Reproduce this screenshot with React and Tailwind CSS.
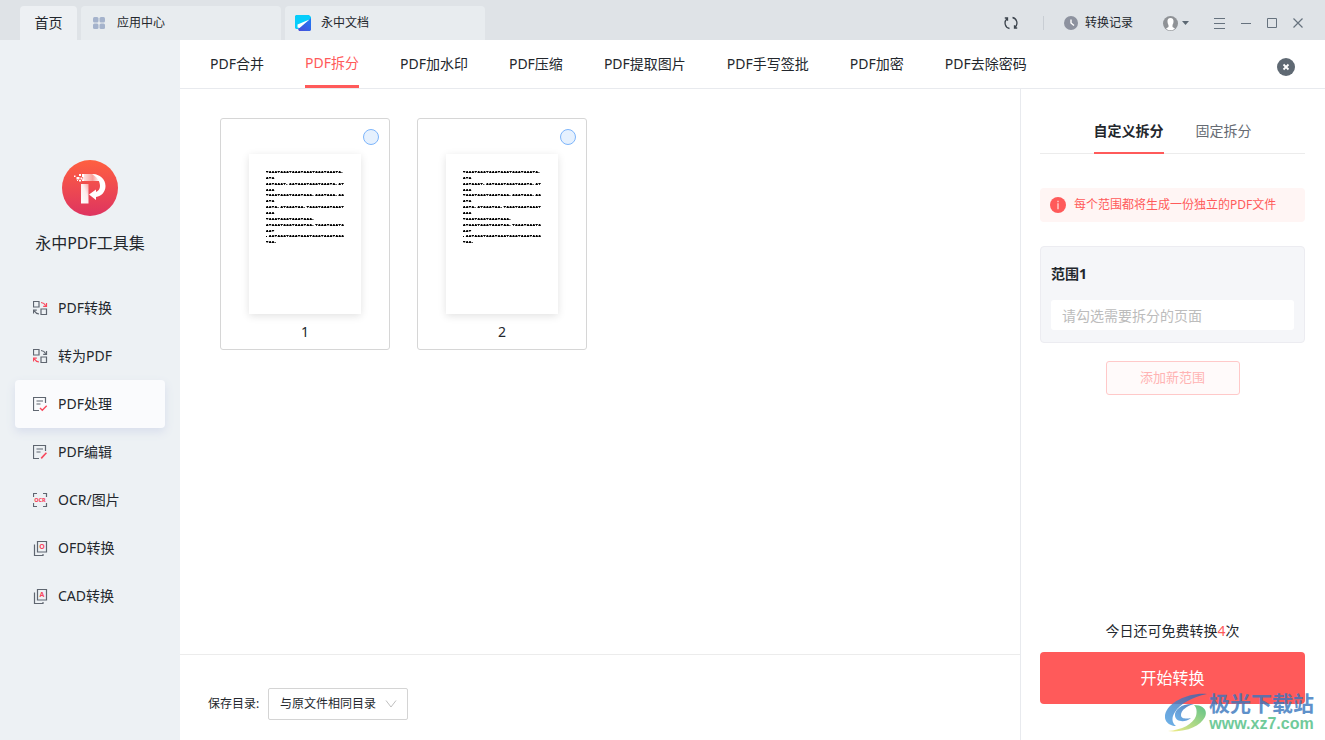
import React, { useState } from "react";

const fontStack = "font-['Noto_Sans','Noto_Sans_CJK_SC',sans-serif]";

const toolTabs = [
  "PDF合并",
  "PDF拆分",
  "PDF加水印",
  "PDF压缩",
  "PDF提取图片",
  "PDF手写签批",
  "PDF加密",
  "PDF去除密码"
];

const menuItems = [
  { label: "PDF转换", icon: "convertFrom" },
  { label: "转为PDF", icon: "convertTo" },
  { label: "PDF处理", icon: "process" },
  { label: "PDF编辑", icon: "edit" },
  { label: "OCR/图片", icon: "ocr" },
  { label: "OFD转换", icon: "ofd" },
  { label: "CAD转换", icon: "cad" }
];

// Rows of the page preview: c = character, . = punctuation
const previewRows = [
  "cccccccccccccccccccccccccc.",
  "ccc",
  "ccccccc.cccccccccccccccc.cc",
  "ccc",
  "cccccccccccccccc.ccccccc.cc",
  "ccc",
  "cccc.cccccccc.ccccccccccccc",
  "ccc",
  "cccccccccccccccc.",
  "cccccccccccccccc.cccccccccc",
  "ccc",
  ".cccccccccccccccccccccccccc",
  "ccc."
];

const MenuIcon = ({ name }) => {
  const dark = "#5f6670";
  const red = "#f9485c";
  const paper = (
    <path d="M12.5 6V.5H.5v13H6M3.500 4h6.500M3.500 7h4" stroke={dark} />
  );
  const pages = (
    <path d="M4.500.5h9v10.500h-9zM1.500 3.500v11h8.500V13" stroke={dark} />
  );

  return (
    <svg width="16" height="16" viewBox="0 -1 16 16" fill="none" strokeWidth="1.2" aria-hidden="true">
      {(name === "convertFrom" || name === "convertTo") && (
        <>
          <path d="M.5.5h5.500v5.500H.5zM8 8h5.500v5.500H8z" stroke={dark} />
          <path
            d="M8 1.500c2 .2 3.600 1.100 4.600 3M13.500 2v3.300h-3.300"
            stroke={name === "convertFrom" ? red : dark}
          />
          <path
            d="M6 13c-2-.2-3.600-1.100-4.600-3M.5 12.500V9.200h3.300"
            stroke={name === "convertFrom" ? dark : red}
          />
        </>
      )}
      {name === "process" && (
        <>
          {paper}
          <path d="M7 11l2.300 2.300 4.400-4.500" stroke={red} strokeWidth="1.4" />
        </>
      )}
      {name === "edit" && (
        <>
          {paper}
          <path d="M8.200 13.400l5.200-5.600" stroke={red} strokeWidth="1.6" />
        </>
      )}
      {name === "ocr" && (
        <>
          <path d="M.5 4V.5H4M10 .5h3.500V4M13.500 10v3.500H10M4 13.500H.5V10" stroke={dark} />
          <text x="7" y="9" textAnchor="middle" fontSize="5.5" fontWeight="800" fill={red}>OCR</text>
        </>
      )}
      {name === "ofd" && (
        <>
          {pages}
          <text x="9" y="8.3" textAnchor="middle" fontSize="7" fontWeight="700" fill={red}>O</text>
        </>
      )}
      {name === "cad" && (
        <>
          {pages}
          <text x="9" y="8.3" textAnchor="middle" fontSize="7" fontWeight="700" fill={red}>A</text>
        </>
      )}
    </svg>
  );
};

const AppLogo = () => (
  <svg width="56" height="56" viewBox="0 0 56 56" aria-hidden="true">
    <defs>
      <linearGradient id="logoBg" x1="0" y1="0" x2="0" y2="1">
        <stop offset="0" stopColor="#ff6040" />
        <stop offset="1" stopColor="#de3460" />
      </linearGradient>
      <linearGradient id="logoBar" x1="0" y1="0" x2="1" y2="0">
        <stop offset="0" stopColor="#fff" stopOpacity="0.85" />
        <stop offset="0.6" stopColor="#fff" stopOpacity="0.45" />
        <stop offset="1" stopColor="#fff" />
      </linearGradient>
      <linearGradient id="logoStem" x1="0" y1="1" x2="1" y2="0">
        <stop offset="0" stopColor="#fff" />
        <stop offset="0.6" stopColor="#fff" stopOpacity="0.9" />
        <stop offset="1" stopColor="#fff" stopOpacity="0.5" />
      </linearGradient>
    </defs>
    <circle cx="28" cy="28" r="28" fill="url(#logoBg)" />
    <path d="M19 24h7.500v19.500H19z" fill="url(#logoStem)" />
    <path d="M21 14h10c5 0 7 3 6 7H21z" fill="url(#logoBar)" />
    <path d="M30 14c8 0 13.500 5 13.500 12 0 6-4 10-9.500 11v3l-7-5.500 7-5v2.500c2.500-1 4-3 4-6 0-5-3-9-8-12z" fill="#fff" />
    <path d="M17 14h2v2h-2zM20 14h2v3h-2zM14.500 17h3v2.500h-3zM18.500 17.500h2v2h-2zM12 15.500h1.500V17H12zM17 20h2v1.500h-2zM15 20h1v1h-1zM20 19.500h2V21h-2z" fill="#fff" />
  </svg>
);

const TitleBar = () => (
  <header className="flex h-10 items-end bg-[#dfe3e7] pl-5 pr-[22px] text-xs">
    <nav className="flex items-end gap-1">
      <button className="h-[34px] w-[57px] rounded-t bg-[#edf0f3] text-sm">首页</button>
      <button className="flex h-[34px] w-[200px] items-center gap-3 rounded-t bg-[#e8ecef] px-3">
        <svg width="12" height="12" viewBox="0 0 12 12" fill="#a5b3cc" aria-hidden="true">
          <rect width="5.5" height="5.5" rx="1.5" />
          <rect x="6.5" width="5.5" height="5.5" rx="1.5" />
          <rect y="6.5" width="5.5" height="5.5" rx="1.5" />
          <rect x="6.5" y="6.5" width="5.5" height="5.5" rx="1.5" />
        </svg>
        应用中心
      </button>
      <button className="flex h-[34px] w-[200px] items-center gap-[10px] rounded-t bg-[#e8ecef] px-[10px]">
        <svg width="16" height="16" viewBox="0 0 16 16" aria-hidden="true">
          <defs>
            <linearGradient id="docBlue" x1="1" y1="0" x2="0" y2="1">
              <stop offset="0" stopColor="#1e7df5" />
              <stop offset="1" stopColor="#4a4bd8" />
            </linearGradient>
          </defs>
          <path d="M1 0h13l2 2v5l-13 7H1l-1-1V1z" fill="#06cdfb" />
          <path d="M16 3v12l-1 1H4l-1-2z" fill="url(#docBlue)" />
          <path d="M14.500 4.500L2.500 9.500v3l2 .5z" fill="#fff" />
        </svg>
        永中文档
      </button>
    </nav>
    <div className="ml-auto flex h-[34px] items-center">
      <button aria-label="刷新">
        <svg width="14" height="14" viewBox="0 0 14 14" fill="none" stroke="#3c444d" strokeWidth="1.3" aria-hidden="true">
          <path d="M5.500 12.500A5.600 5.600 0 0 1 2.800 3M.8 2h2.700v2.700M8.500 1.500A5.600 5.600 0 0 1 11.200 11M13.200 12h-2.700V9.300" />
        </svg>
      </button>
      <span className="ml-[25px] h-[14px] w-px bg-[#c9ced4]" />
      <button className="ml-5 flex items-center gap-[7px]">
        <svg width="14" height="14" viewBox="0 0 14 14" fill="none" aria-hidden="true">
          <circle cx="7" cy="7" r="7" fill="#8d929f" />
          <path d="M7 3.500V7l3 2.500" stroke="#fff" strokeWidth="1.4" />
        </svg>
        转换记录
      </button>
      <button className="ml-[30px] flex items-center gap-1" aria-label="账户">
        <svg width="15" height="15" viewBox="0 0 15 15" aria-hidden="true">
          <circle cx="7.5" cy="7.5" r="7.5" fill="#8f9296" />
          <path d="M7.500 2c2.200 0 3.200 1.600 3 3.700-.1 1.500-.6 2.500-1 3.200v2l2.500 1.500c-2.500 2.600-6.500 2.600-9 0L5.500 11V9c-.4-.8-.9-1.800-1-3.300C4.300 3.600 5.300 2 7.500 2z" fill="#fff" />
        </svg>
        <svg width="7" height="4" viewBox="0 0 7 4" fill="#5c6873" aria-hidden="true">
          <path d="M0 0h7L3.500 4z" />
        </svg>
      </button>
      <div className="ml-[25px] flex items-center gap-4">
        <button aria-label="菜单">
          <svg width="11" height="12" viewBox="0 0 11 12" stroke="#66727e" aria-hidden="true">
            <path d="M0 1.500h11M0 6.500h11M0 11.500h11" />
          </svg>
        </button>
        <button aria-label="最小化">
          <svg width="10" height="12" viewBox="0 0 10 12" stroke="#66727e" aria-hidden="true">
            <path d="M0 6.500h10" />
          </svg>
        </button>
        <button aria-label="最大化">
          <svg width="10" height="10" viewBox="0 0 10 10" fill="none" stroke="#66727e" aria-hidden="true">
            <path d="M.5.5h9v9h-9z" />
          </svg>
        </button>
        <button aria-label="关闭">
          <svg width="10" height="10" viewBox="0 0 10 10" stroke="#66727e" strokeWidth="1.2" aria-hidden="true">
            <path d="M.5.5l9 9M9.500.5l-9 9" />
          </svg>
        </button>
      </div>
    </div>
  </header>
);

const Sidebar = ({ active, onSelect }) => (
  <aside className="flex w-[180px] shrink-0 flex-col items-center bg-[#edf1f4] pt-[120px]">
    <AppLogo />
    <h1 className="mt-[15px] text-base leading-6">永中PDF工具集</h1>
    <nav className="mt-[29px] w-full px-[15px]">
      {menuItems.map((item) => (
        <button
          key={item.label}
          onClick={() => onSelect(item.label)}
          className={`flex h-12 w-full items-center gap-[9px] rounded pl-[18px] text-sm ${
            active === item.label ? "bg-[#fafbfd] shadow-[0_4px_10px_#d8deec]" : ""
          }`}
        >
          <MenuIcon name={item.icon} />
          {item.label}
        </button>
      ))}
    </nav>
  </aside>
);

const PageCard = ({ number }) => (
  <label className="flex w-[170px] flex-col rounded-[3px] border border-[#d6d6d6] pt-[10px]">
    <input
      type="checkbox"
      aria-label={`第${number}页`}
      className="mr-[10px] h-4 w-4 appearance-none self-end rounded-full border border-[#7db5fb] bg-[#e6f1fe] checked:bg-[#7db5fb]"
    />
    <svg
      width="112"
      height="160"
      viewBox="0 0 112 160"
      className="mt-[9px] self-center bg-white shadow-[0_2px_8px_#e2e2e2]"
      aria-hidden="true"
    >
      {previewRows.map((row, r) =>
        row.split("").map((ch, c) => {
          const x = 17 + c * 2.9;
          const y = 17 + Math.round(r * 5.86);
          return ch === "." ? (
            <rect key={`${r}-${c}`} x={x} y={y + 1} width="1" height="1" />
          ) : (
            <path
              key={`${r}-${c}`}
              d={(r * 5 + c * 3) % 4 === 0 ? `M${x} ${y}h2.3v1h-.8v1h-.8v-1H${x}z` : `M${x + 0.4} ${y}h1.6v1h.4v1H${x}v-1h.4z`}
            />
          );
        })
      )}
    </svg>
    <span className="mt-2 mb-[7px] text-center text-sm leading-5">{number}</span>
  </label>
);

const SplitPanel = () => (
  <aside className="flex w-[305px] shrink-0 flex-col border-l border-[#e8eaee] pt-5 pr-5 pb-9 pl-[19px]">
    <div className="flex justify-center gap-8 border-b border-[#ececec] text-sm">
      <button className="-mb-px h-[45px] border-b-2 border-[#ff5a5a] font-bold">自定义拆分</button>
      <button className="-mb-px h-[45px] border-b-2 border-transparent text-[#666b73]">固定拆分</button>
    </div>

    <p className="mt-[34px] flex h-[34px] items-center gap-2 rounded-sm bg-[#fff5f4] px-[10px] text-xs text-[#ff5a5a]">
      <svg width="16" height="16" viewBox="0 0 16 16" aria-hidden="true">
        <circle cx="8" cy="8" r="8" fill="#ff5a5a" />
        <path d="M7.300 3.800h1.400v1.400H7.300zM7.300 6.300h1.400v6H7.300z" fill="#ffd0ce" />
      </svg>
      每个范围都将生成一份独立的PDF文件
    </p>

    <div className="mt-6 rounded border border-[#ececf1] bg-[#f5f6f9] px-[10px] pt-4 pb-3">
      <label htmlFor="range-1" className="block text-sm leading-[22px] font-bold">
        范围1
      </label>
      <input
        id="range-1"
        placeholder="请勾选需要拆分的页面"
        className="mt-[15px] block h-[30px] w-full rounded-[3px] bg-white px-[11px] text-sm placeholder:text-[#bcbcbc]"
      />
    </div>

    <button className="mt-[18px] h-[34px] w-[134px] self-center rounded-[3px] border border-[#ffc9c9] bg-[#fffafa] text-[13px] text-[#ffb3b3]">
      添加新范围
    </button>

    <p className="mt-auto text-center text-sm leading-5">
      今日还可免费转换<span className="text-[#ff5a5a]">4</span>次
    </p>
    <button className="mt-[11px] h-[52px] rounded bg-[#ff5a5a] text-base text-white">开始转换</button>
  </aside>
);

const Watermark = () => (
  <div className="pointer-events-none absolute right-[11px] bottom-[6px] flex items-center gap-[2px] opacity-80">
    <svg width="42" height="40" viewBox="0 0 42 40" aria-hidden="true">
      <defs>
        <linearGradient id="swirlBlue" x1="1" y1="0" x2="0" y2="1">
          <stop offset="0" stopColor="#3263ae" />
          <stop offset="1" stopColor="#4ba0e4" />
        </linearGradient>
        <linearGradient id="swirlGreen" x1="1" y1="0" x2="0" y2="1">
          <stop offset="0" stopColor="#35b36d" />
          <stop offset="1" stopColor="#f4ea67" />
        </linearGradient>
      </defs>
      <path d="M42 1C26-1 3 8 0 22c-1 7 5 11 11 11-4-3-5-8-1-14C15 11 27 4 42 1z" fill="url(#swirlBlue)" />
      <path d="M29 11c-11-1-20 5-19 12 1 6 10 7 16 2-5 1-10 1-10-3 0-5 6-9 13-11z" fill="url(#swirlBlue)" />
      <path d="M29 12c9 0 14 5 11 12C35 34 18 40 3 38c14-1 25-7 28-15 1-4 1-8-2-11z" fill="url(#swirlGreen)" />
    </svg>
    <div className="text-center font-bold">
      <div className="text-[21px] leading-[22px] text-[#3876bd]">极光下载站</div>
      <div className="font-['Liberation_Sans',sans-serif] text-base leading-5 text-[#4dbd82]">www.xz7.com</div>
    </div>
  </div>
);

const App = () => {
  const [activeTab, setActiveTab] = useState("PDF拆分");
  const [activeMenu, setActiveMenu] = useState("PDF处理");

  return (
    <div className={`relative flex min-h-screen flex-col bg-white text-[#23272d] ${fontStack}`}>
      <TitleBar />
      <div className="flex flex-1">
        <Sidebar active={activeMenu} onSelect={setActiveMenu} />
        <div className="flex min-w-0 flex-1 flex-col">
          {/* Tool tabs */}
          <div className="flex h-[49px] items-stretch border-b border-[#e8eaee] px-[30px]">
            <nav className="flex gap-[41px] text-sm">
              {toolTabs.map((tab) => (
                <button
                  key={tab}
                  onClick={() => setActiveTab(tab)}
                  className={`whitespace-nowrap ${
                    activeTab === tab ? "border-b-3 border-[#ff5a5a] text-[#ff5a5a]" : ""
                  }`}
                >
                  {tab}
                </button>
              ))}
            </nav>
            <button className="ml-auto pt-[6px]" aria-label="关闭文件">
              <svg width="18" height="18" viewBox="0 0 18 18" aria-hidden="true">
                <circle cx="9" cy="9" r="9" fill="#5f6973" />
                <path d="M6.500 6.500l5 5M11.500 6.500l-5 5" stroke="#fff" strokeWidth="1.8" />
              </svg>
            </button>
          </div>

          <div className="flex flex-1">
            <main className="flex flex-1 flex-col">
              <div className="flex flex-1 flex-wrap content-start items-start gap-[27px] px-10 pt-[29px]">
                <PageCard number={1} />
                <PageCard number={2} />
              </div>
              <div className="flex h-[86px] items-center border-t border-[#ececec] pt-3 pl-7 text-xs">
                <label htmlFor="save-dir" className="w-[60px]">保存目录:</label>
                <div className="relative">
                  <select
                    id="save-dir"
                    className="h-8 w-[140px] appearance-none rounded-xs border border-[#d4d4d4] bg-white pl-[11px]"
                  >
                    <option>与原文件相同目录</option>
                  </select>
                  <svg
                    width="12"
                    height="8"
                    viewBox="0 0 12 8"
                    fill="none"
                    stroke="#bfbfbf"
                    className="pointer-events-none absolute top-3 right-[11px]"
                    aria-hidden="true"
                  >
                    <path d="M1 .5l5 6.500 5-6.500" />
                  </svg>
                </div>
              </div>
            </main>
            <SplitPanel />
          </div>
        </div>
      </div>
      <Watermark />
    </div>
  );
};

export default App;
